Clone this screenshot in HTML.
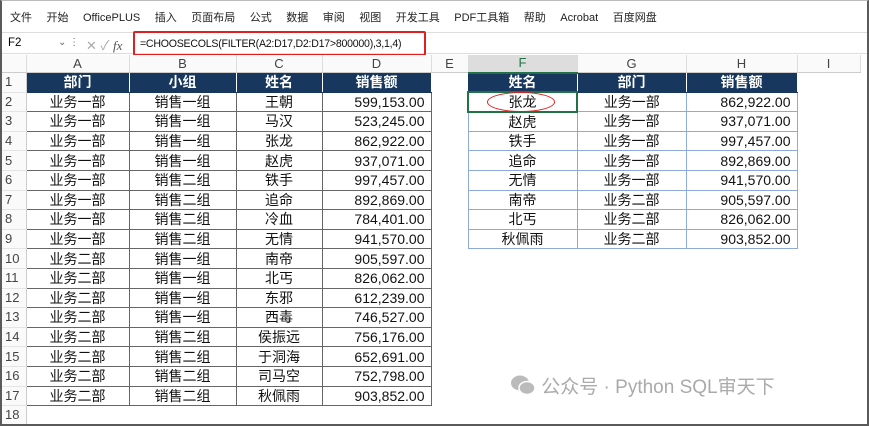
<!DOCTYPE html>
<html><head><meta charset="utf-8"><style>
*{box-sizing:border-box;margin:0;padding:0}
html,body{width:869px;height:426px;overflow:hidden}
body{background:#fff;font-family:"Liberation Sans","Noto Sans CJK SC",sans-serif;position:relative}
.frame{position:absolute;left:0;top:0;width:869px;height:426px;border:2px solid #5a5a5a;border-top:1px solid #bbb;pointer-events:none;z-index:10}
.menu{position:absolute;top:9px;left:10px;font-size:11px;color:#222;white-space:nowrap}
.menu span{margin-right:14.5px}
.fbar{position:absolute;top:32px;left:0;width:869px;height:22px;border-top:1px solid #ddd;border-bottom:1px solid #ddd;font-size:11.5px}
.nb{position:absolute;left:8px;top:4px}
.fx{position:absolute;left:86px;top:2px;color:#aaa;font-size:13px}
.form{position:absolute;left:133px;top:-2px;width:293px;height:25px;border:2px solid #e02020;border-radius:2px;padding:5px 0 0 5px;font-size:10.6px;letter-spacing:-0.25px;color:#111;white-space:nowrap}
table{position:absolute;left:0;top:55px;border-collapse:collapse;table-layout:fixed;font-size:14px}
td{height:19.6px;line-height:16px;padding:0 6px;white-space:nowrap;text-align:center;color:#111;overflow:hidden}
tr.ch td{height:17.5px;color:#444;font-size:13px;border-right:1px solid #ddd;border-bottom:1px solid #ccc;background:#fafafa}
td.rh{color:#444;font-size:13px;text-align:left;padding-left:5px;border-right:1px solid #ccc;border-bottom:1px solid #e4e4e4;background:#fafafa}
td.d{border:1px solid #666}
td.h{background:#17375e;color:#fff;font-weight:bold;border:1px solid #17375e;border-right:1px solid #fff}
td.f{border:1px solid #8ea9db}
td.r{text-align:right}
.wm{position:absolute;left:510px;top:372px;font-size:19px;color:#aaa;white-space:nowrap}
</style></head><body>
<div class="menu"><span>文件</span><span>开始</span><span>OfficePLUS</span><span>插入</span><span>页面布局</span><span>公式</span><span>数据</span><span>审阅</span><span>视图</span><span>开发工具</span><span>PDF工具箱</span><span>帮助</span><span>Acrobat</span><span>百度网盘</span></div>
<div class="fbar"><span class="nb">F2</span><span style="position:absolute;left:58px;top:4px;color:#666;font-size:10px">⌄ ⋮</span><span class="fx">✕ ✓ <i style="font-family:'Liberation Serif';color:#555">fx</i></span><div class="form">=CHOOSECOLS(FILTER(A2:D17,D2:D17&gt;800000),3,1,4)</div></div>
<table>
<colgroup><col style="width:26px"><col style="width:103px"><col style="width:107px"><col style="width:86px"><col style="width:109px"><col style="width:37px"><col style="width:109px"><col style="width:109px"><col style="width:111px"><col style="width:63px"></colgroup>
<tr class="ch"><td></td><td>A</td><td>B</td><td>C</td><td>D</td><td>E</td><td style="background:#ddd;color:#217346;border-bottom:2px solid #217346">F</td><td>G</td><td>H</td><td>I</td></tr>
<tr><td class="rh">1</td><td class="h">部门</td><td class="h">小组</td><td class="h">姓名</td><td class="h">销售额</td><td></td><td class="h">姓名</td><td class="h">部门</td><td class="h">销售额</td><td></td></tr>
<tr><td class="rh">2</td><td class="d">业务一部</td><td class="d">销售一组</td><td class="d">王朝</td><td class="d r">599,153.00</td><td></td><td style="border:2px solid #217346;position:relative;overflow:visible"><span style="position:absolute;left:18px;top:-1px;width:68px;height:20px;border:1.5px solid #e02020;border-radius:50%"></span>张龙</td><td class="f">业务一部</td><td class="f r">862,922.00</td><td></td></tr>
<tr><td class="rh">3</td><td class="d">业务一部</td><td class="d">销售一组</td><td class="d">马汉</td><td class="d r">523,245.00</td><td></td><td class="f">赵虎</td><td class="f">业务一部</td><td class="f r">937,071.00</td><td></td></tr>
<tr><td class="rh">4</td><td class="d">业务一部</td><td class="d">销售一组</td><td class="d">张龙</td><td class="d r">862,922.00</td><td></td><td class="f">铁手</td><td class="f">业务一部</td><td class="f r">997,457.00</td><td></td></tr>
<tr><td class="rh">5</td><td class="d">业务一部</td><td class="d">销售一组</td><td class="d">赵虎</td><td class="d r">937,071.00</td><td></td><td class="f">追命</td><td class="f">业务一部</td><td class="f r">892,869.00</td><td></td></tr>
<tr><td class="rh">6</td><td class="d">业务一部</td><td class="d">销售二组</td><td class="d">铁手</td><td class="d r">997,457.00</td><td></td><td class="f">无情</td><td class="f">业务一部</td><td class="f r">941,570.00</td><td></td></tr>
<tr><td class="rh">7</td><td class="d">业务一部</td><td class="d">销售二组</td><td class="d">追命</td><td class="d r">892,869.00</td><td></td><td class="f">南帝</td><td class="f">业务二部</td><td class="f r">905,597.00</td><td></td></tr>
<tr><td class="rh">8</td><td class="d">业务一部</td><td class="d">销售二组</td><td class="d">冷血</td><td class="d r">784,401.00</td><td></td><td class="f">北丐</td><td class="f">业务二部</td><td class="f r">826,062.00</td><td></td></tr>
<tr><td class="rh">9</td><td class="d">业务一部</td><td class="d">销售二组</td><td class="d">无情</td><td class="d r">941,570.00</td><td></td><td class="f">秋佩雨</td><td class="f">业务二部</td><td class="f r">903,852.00</td><td></td></tr>
<tr><td class="rh">10</td><td class="d">业务二部</td><td class="d">销售一组</td><td class="d">南帝</td><td class="d r">905,597.00</td><td></td><td></td><td></td><td></td><td></td></tr>
<tr><td class="rh">11</td><td class="d">业务二部</td><td class="d">销售一组</td><td class="d">北丐</td><td class="d r">826,062.00</td><td></td><td></td><td></td><td></td><td></td></tr>
<tr><td class="rh">12</td><td class="d">业务二部</td><td class="d">销售一组</td><td class="d">东邪</td><td class="d r">612,239.00</td><td></td><td></td><td></td><td></td><td></td></tr>
<tr><td class="rh">13</td><td class="d">业务二部</td><td class="d">销售一组</td><td class="d">西毒</td><td class="d r">746,527.00</td><td></td><td></td><td></td><td></td><td></td></tr>
<tr><td class="rh">14</td><td class="d">业务二部</td><td class="d">销售二组</td><td class="d">侯振远</td><td class="d r">756,176.00</td><td></td><td></td><td></td><td></td><td></td></tr>
<tr><td class="rh">15</td><td class="d">业务二部</td><td class="d">销售二组</td><td class="d">于洞海</td><td class="d r">652,691.00</td><td></td><td></td><td></td><td></td><td></td></tr>
<tr><td class="rh">16</td><td class="d">业务二部</td><td class="d">销售二组</td><td class="d">司马空</td><td class="d r">752,798.00</td><td></td><td></td><td></td><td></td><td></td></tr>
<tr><td class="rh">17</td><td class="d">业务二部</td><td class="d">销售二组</td><td class="d">秋佩雨</td><td class="d r">903,852.00</td><td></td><td></td><td></td><td></td><td></td></tr>
<tr><td class="rh">18</td><td></td><td></td><td></td><td></td><td></td><td></td><td></td><td></td><td></td></tr>
</table>
<div class="wm"><svg width="26" height="22" viewBox="0 0 26 22" style="vertical-align:-3px"><ellipse cx="10" cy="9" rx="9" ry="7.5" fill="#bbb"/><ellipse cx="17" cy="14" rx="8" ry="6.5" fill="#bbb" stroke="#fff" stroke-width="1.5"/></svg> 公众号 · Python SQL审天下</div>
<div class="frame"></div>
</body></html>
